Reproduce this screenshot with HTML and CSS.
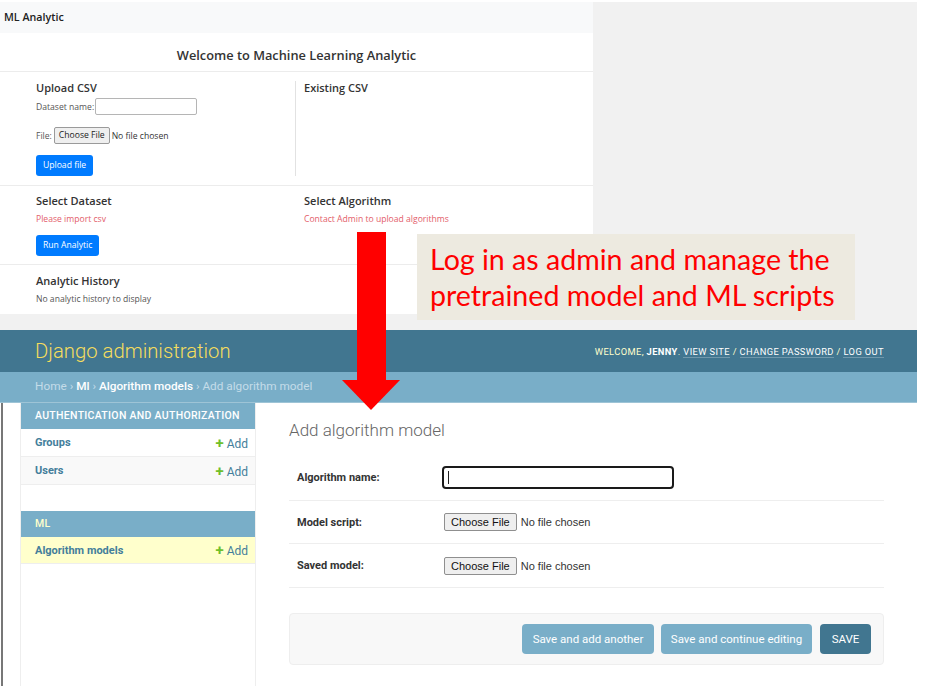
FILE: index.html
```html
<!DOCTYPE html>
<html>
<head>
<meta charset="utf-8">
<link rel="stylesheet" href="styles.css">
</head>
<body>
<div class="page">
  <div class="top">
    <div class="ml">
      <nav class="ml-nav">ML Analytic</nav>
      <div class="ml-welcome">Welcome to Machine Learning Analytic</div>
      <section class="ml-row ml-upload">
        <div class="ml-col ml-col-left">
          <h3 class="ml-h">Upload CSV</h3>
          <div class="ml-field"><span class="ml-small">Dataset name:</span><span class="ml-input"></span></div>
          <div class="ml-field ml-file"><span class="ml-small">File:</span><span class="ml-filebtn">Choose File</span><span class="ml-small ml-dark">No file chosen</span></div>
          <span class="ml-btn">Upload file</span>
        </div>
        <div class="ml-col ml-col-right">
          <h3 class="ml-h">Existing CSV</h3>
        </div>
      </section>
      <section class="ml-row ml-select">
        <div class="ml-col ml-col-left ml-noborder">
          <h3 class="ml-h">Select Dataset</h3>
          <p class="ml-err">Please import csv</p>
          <span class="ml-btn ml-btn-run">Run Analytic</span>
        </div>
        <div class="ml-col ml-col-right">
          <h3 class="ml-h">Select Algorithm</h3>
          <p class="ml-err">Contact Admin to upload algorithms</p>
        </div>
      </section>
      <section class="ml-history">
        <h3 class="ml-h">Analytic History</h3>
        <p class="ml-small">No analytic history to display</p>
      </section>
    </div>
  </div>

  <div class="django">
    <header class="dj-header">
      <div class="dj-brand">Django administration</div>
      <div class="dj-tools">WELCOME, <strong>JENNY</strong>. <a>VIEW SITE</a> / <a>CHANGE PASSWORD</a> / <a>LOG OUT</a></div>
    </header>
    <div class="dj-crumbs"><span class="dj-home">Home</span> › <a>Ml</a> › <a>Algorithm models</a> › Add algorithm model</div>
    <div class="dj-body">
      <aside class="dj-nav">
        <div class="dj-module">
          <div class="dj-caption">AUTHENTICATION AND AUTHORIZATION</div>
          <div class="dj-item"><span class="dj-model">Groups</span><span class="dj-add"><b>+</b> Add</span></div>
          <div class="dj-item dj-alt"><span class="dj-model">Users</span><span class="dj-add"><b>+</b> Add</span></div>
        </div>
        <div class="dj-module">
          <div class="dj-caption dj-current">ML</div>
          <div class="dj-item dj-cur-model"><span class="dj-model">Algorithm models</span><span class="dj-add"><b>+</b> Add</span></div>
        </div>
      </aside>
      <main class="dj-main">
        <h1 class="dj-title">Add algorithm model</h1>
        <div class="dj-form-row dj-row1">
          <label class="dj-label">Algorithm name:</label>
          <span class="dj-text"><span class="dj-caret"></span></span>
        </div>
        <div class="dj-form-row dj-row2">
          <label class="dj-label">Model script:</label>
          <span class="dj-filebtn">Choose File</span><span class="dj-nofile">No file chosen</span>
        </div>
        <div class="dj-form-row dj-row3">
          <label class="dj-label">Saved model:</label>
          <span class="dj-filebtn">Choose File</span><span class="dj-nofile">No file chosen</span>
        </div>
        <div class="dj-submit">
          <span class="dj-button dj-light dj-b1">Save and add another</span>
          <span class="dj-button dj-light dj-b2">Save and continue editing</span>
          <span class="dj-button dj-default">SAVE</span>
        </div>
      </main>
    </div>
  </div>

  <div class="callout">Log in as admin and manage the<br>pretrained model and ML scripts</div>
  <svg class="arrow" width="62" height="180" viewBox="0 0 62 180">
    <rect x="17" y="0" width="29" height="149" fill="#ff0000"/>
    <polygon points="2,148 60,148 31,178" fill="#ff0000"/>
  </svg>
</div>
</body>
</html>
```

FILE: styles.css
```css
* { box-sizing: border-box; }
html, body { margin: 0; padding: 0; background: #fff; }
.page {
  position: relative;
  width: 926px;
  height: 686px;
  overflow: hidden;
  background: #fff;
}

/* ---------- ML Analytic screenshot ---------- */
.top {
  width: 917px;
  height: 328px;
  margin-top: 2px;
  background: #f1f1f1;
  display: flex;
}
.ml {
  width: 593px;
  height: 312px;
  background: #fff;
  display: flex;
  flex-direction: column;
  font-family: "Open Sans", "Noto Sans", sans-serif;
  color: #333;
}
.ml-nav {
  height: 31px;
  background: #f8f9fa;
  padding-left: 4px;
  font-size: 10.7px;
  font-weight: 600;
  line-height: 31px;
  color: #222;
}
.ml-welcome {
  height: 39px;
  border-bottom: 1px solid #ececec;
  text-align: center;
  font-size: 12.8px;
  font-weight: 600;
  line-height: 44px;
  color: #333;
}
.ml-row {
  display: flex;
  border-bottom: 1px solid #ececec;
}
.ml-upload { padding: 9px 0 9px; }
.ml-select { padding: 8px 0 8px; }
.ml-col { display: flex; flex-direction: column; align-items: flex-start; }
.ml-col-left {
  width: 296px;
  padding-left: 36px;
  border-right: 1px solid #e2e2e2;
}
.ml-noborder { border-right-color: transparent; }
.ml-col-right { padding-left: 8px; }
.ml-h {
  margin: 0;
  font-size: 11px;
  font-weight: 600;
  line-height: 14px;
  color: #333;
}
.ml-small {
  margin: 0;
  font-size: 8.6px;
  line-height: 12px;
  color: #555;
}
.ml-dark { color: #333; }
.ml-field {
  display: flex;
  align-items: center;
  gap: 1px;
  margin-top: 3px;
}
.ml-file { margin-top: 12px; gap: 2px; }
.ml-input {
  width: 102px;
  height: 17px;
  border: 1px solid #b5b5b5;
  border-radius: 2px;
  background: #fff;
}
.ml-filebtn {
  height: 17px;
  padding: 0 4px;
  border: 1px solid #9a9a9a;
  border-radius: 2px;
  background: #efefef;
  font-size: 8.6px;
  line-height: 15px;
  color: #222;
}
.ml-btn {
  margin-top: 11px;
  height: 21px;
  padding: 0 7px;
  border-radius: 3px;
  background: #007bff;
  color: #fff;
  font-size: 8.6px;
  line-height: 21px;
}
.ml-btn-run { margin-top: 10px; }
.ml-err {
  margin: 5px 0 0;
  font-size: 8.6px;
  line-height: 12px;
  color: #e35d6a;
}
.ml-history {
  padding: 9px 0 0 36px;
}
.ml-history .ml-small { margin-top: 5px; }

/* ---------- Callout & arrow ---------- */
.callout {
  position: absolute;
  left: 417px;
  top: 234px;
  width: 438px;
  height: 86px;
  background: #edeae0;
  padding: 7px 0 0 13px;
  font-family: Lato, "Open Sans", sans-serif;
  font-size: 28.6px;
  line-height: 36px;
  color: #ff0000;
  white-space: nowrap;
}
.arrow {
  position: absolute;
  left: 340px;
  top: 232px;
}

/* ---------- Django admin ---------- */
.django {
  width: 917px;
  font-family: Roboto, "Liberation Sans", sans-serif;
}
.dj-header {
  height: 42px;
  background: #417690;
  display: flex;
  justify-content: space-between;
  align-items: center;
  padding: 0 33px 0 35px;
}
.dj-brand {
  font-size: 20.3px;
  font-weight: 300;
  color: #f5dd5d;
}
.dj-tools {
  font-size: 9.3px;
  letter-spacing: 0.4px;
  color: #ffc;
  padding-top: 1px;
}
.dj-tools strong { color: #fff; font-weight: 700; }
.dj-tools a {
  color: #fff;
  border-bottom: 1px solid rgba(255,255,255,0.25);
}
.dj-crumbs {
  height: 31px;
  background: #79aec8;
  border-bottom: 1px solid #9ec4d6;
  padding-left: 35px;
  font-size: 11.8px;
  line-height: 29px;
  color: #c4dce8;
}
.dj-crumbs a { color: #fff; font-weight: 500; }
.dj-body {
  display: flex;
  height: 283px;
  margin-left: 1px;
  border-left: 2px solid #777;
}
.dj-nav {
  width: 236px;
  margin-left: 17px;
  border-left: 1px solid #eee;
  border-right: 1px solid #eee;
}
.dj-module { margin-bottom: 26px; }
.dj-caption {
  height: 26px;
  background: #79aec8;
  padding-left: 14px;
  font-size: 10.5px;
  font-weight: 500;
  letter-spacing: 0.3px;
  line-height: 26px;
  color: #fff;
}
.dj-current { color: #ffc; }
.dj-item {
  height: 28px;
  display: flex;
  justify-content: space-between;
  align-items: center;
  padding: 0 7px 0 14px;
  border-bottom: 1px solid #eee;
  font-size: 11px;
}
.dj-alt { background: #f9f9f9; }
.dj-cur-model { background: #ffc; height: 27px; }
.dj-model { color: #447e9b; font-weight: 700; }
.dj-add { color: #447e9b; font-size: 12px; }
.dj-add b { color: #70bf2b; font-size: 15px; font-weight: 700; }
.dj-main {
  width: 595px;
  margin-left: 33px;
}
.dj-title {
  margin: 15px 0 0;
  font-size: 17px;
  font-weight: 300;
  line-height: 24px;
  color: #666;
}
.dj-form-row {
  display: flex;
  align-items: center;
  border-bottom: 1px solid #eee;
  padding-left: 8px;
}
.dj-row1 { margin-top: 13px; height: 46px; }
.dj-row2 { height: 43px; }
.dj-row3 { height: 44px; }
.dj-label {
  width: 145px;
  font-size: 11px;
  font-weight: 700;
  color: #333;
}
.dj-text {
  display: flex;
  align-items: center;
  width: 232px;
  height: 23px;
  border: 2px solid #1a1a1a;
  border-radius: 4px;
  padding-left: 4px;
  margin-top: -1px;
}
.dj-caret { width: 1px; height: 13px; background: #222; }
.dj-filebtn {
  margin-left: 2px;
  height: 18px;
  padding: 0 6px;
  border: 1px solid #8f8f8f;
  border-radius: 2px;
  background: #efefef;
  font-family: "Liberation Sans", Arial, sans-serif;
  font-size: 11px;
  line-height: 16px;
  color: #111;
}
.dj-nofile {
  margin-left: 4px;
  font-family: "Liberation Sans", Arial, sans-serif;
  font-size: 11px;
  color: #333;
}
.dj-submit {
  margin-top: 25px;
  height: 52px;
  background: #f8f8f8;
  border: 1px solid #eee;
  border-radius: 4px;
  display: flex;
  justify-content: flex-end;
  align-items: center;
  gap: 7px;
  padding-right: 12px;
}
.dj-button {
  height: 30px;
  border-radius: 4px;
  color: #fff;
  font-size: 11.5px;
  line-height: 30px;
  text-align: center;
}
.dj-light { background: #79aec8; }
.dj-b1 { width: 132px; }
.dj-b2 { width: 151px; }
.dj-default { background: #417690; width: 51px; margin-left: 1px; }
```
